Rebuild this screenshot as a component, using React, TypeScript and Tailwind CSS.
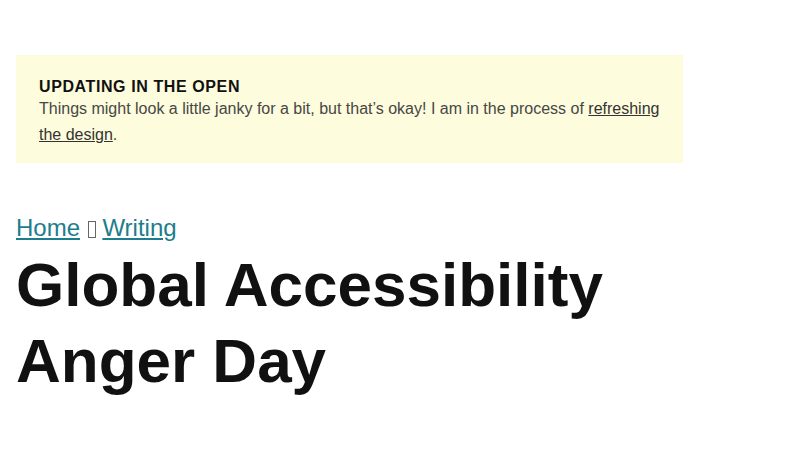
export default function App() {
  return (
    <div className="min-h-[450px] bg-white font-['Liberation_Sans',Arial,sans-serif] px-4 pt-[55px]">
      <div className="w-[667px]">
        <div className="bg-[#fdfcdc] pl-[23px] pr-[22px] pt-[23px] pb-[15px]">
          <p className="text-[16px] leading-[18px] font-bold uppercase tracking-[0.6px] text-[#111]">
            Updating in the open
          </p>
          <p className="text-[16px] leading-[26px] text-[#474747]">
            Things might look a little janky for a bit, but that’s okay! I am in the process of{" "}
            <a href="#" className="underline text-[#333]">refreshing the design</a>.
          </p>
        </div>
        <nav className="mt-[47px] text-[24px] leading-[36px] text-[#1e7d8c]">
          <a href="#" className="underline">Home</a>{" "}
          <span className="inline-block align-[-2px] w-[8px] h-[17px] ml-[1px] border border-[#666]"></span>{" "}
          <a href="#" className="underline">Writing</a>
        </nav>
        <h1 className="mt-[1px] text-[62px] leading-[76px] font-bold text-[#111]">
          Global Accessibility Anger Day
        </h1>
      </div>
    </div>
  );
}
